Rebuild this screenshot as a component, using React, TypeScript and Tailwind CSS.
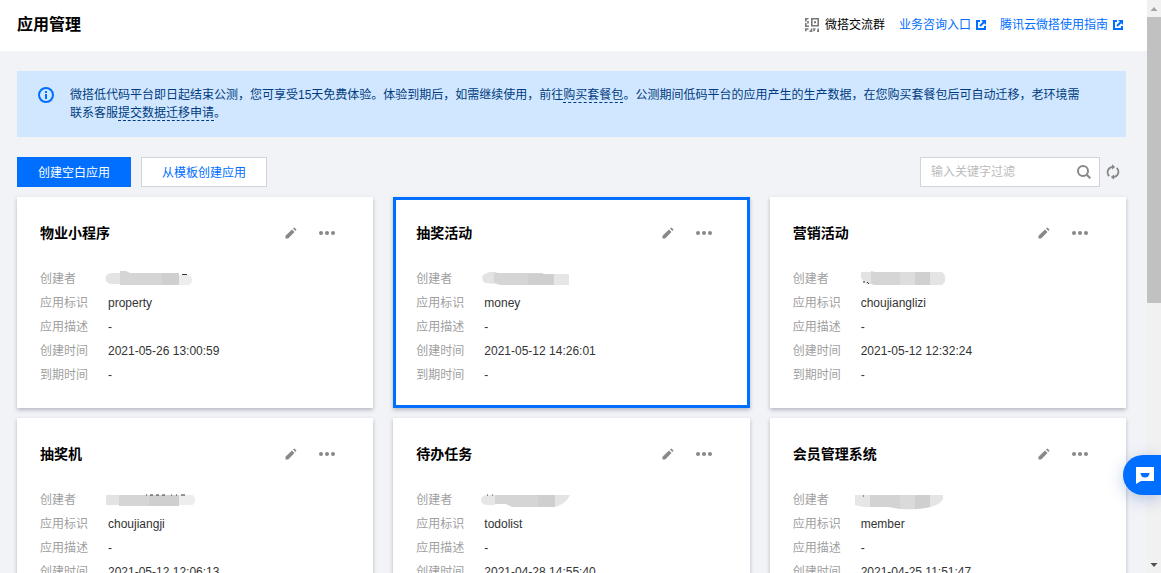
import { useState } from "react";

interface MaskPiece {
  d: string;
  fill: string;
}

interface AppInfo {
  name: string;
  ident: string;
  desc: string;
  created: string;
  expires: string;
  mask: MaskPiece[];
  marks?: string;
}

const APPS: AppInfo[] = [
  {
    name: "物业小程序",
    ident: "property",
    desc: "-",
    created: "2021-05-26 13:00:59",
    expires: "-",
    mask: [
      { d: "M16 3H8a6 5 0 0 0 0 11h8z", fill: "#e3e3e3" },
      { d: "M16 1h6l4 2h37v12H16z", fill: "#d5d5d5" },
      { d: "M58 3h17v12H58z", fill: "#cfcfcf" },
      { d: "M75 5h9a4 5 0 0 1 0 10h-9z", fill: "#ededed" },
    ],
    marks: "M78 4.500h5",
  },
  {
    name: "抽奖活动",
    ident: "money",
    desc: "-",
    created: "2021-05-12 14:26:01",
    expires: "-",
    mask: [
      { d: "M14 2H9L3 5a4 5 0 0 0 3 8l8 1z", fill: "#e3e3e3" },
      { d: "M14 2l4 1h45v12H20l-6-2z", fill: "#d5d5d5" },
      { d: "M48 4h26v11H48z", fill: "#cfcfcf" },
      { d: "M74 4h15v11H74z", fill: "#e6e6e6" },
    ],
  },
  {
    name: "营销活动",
    ident: "choujianglizi",
    desc: "-",
    created: "2021-05-12 12:32:24",
    expires: "-",
    mask: [
      { d: "M4 2h10v12H9L4 8z", fill: "#e3e3e3" },
      { d: "M14 1l4 1h25v13H18l-4-1z", fill: "#d5d5d5" },
      { d: "M43 2h15v13H43z", fill: "#dddddd" },
      { d: "M58 2h15v13H58z", fill: "#d0d0d0" },
      { d: "M73 2h11a4 6 0 0 1 0 13H73z", fill: "#e4e4e4" },
    ],
    marks: "M7 11v2M10 12l2 2",
  },
  {
    name: "抽奖机",
    ident: "choujiangji",
    desc: "-",
    created: "2021-05-12 12:06:13",
    expires: "-",
    mask: [
      { d: "M15 4H2v10h13z", fill: "#e3e3e3" },
      { d: "M15 4h45v11H15z", fill: "#d5d5d5" },
      { d: "M45 4h30v11H45z", fill: "#cfcfcf" },
      { d: "M75 4h13a3 5 0 0 1 0 10H75z", fill: "#ededed" },
    ],
    marks: "M42 4h1M46 4h3M52 4h3M58 4h3M67 4h1M72 4h1M77 4h4",
  },
  {
    name: "待办任务",
    ident: "todolist",
    desc: "-",
    created: "2021-04-28 14:55:40",
    expires: "-",
    mask: [
      { d: "M15 4H8a6 5 0 0 0-2 10h9z", fill: "#e6e6e6" },
      { d: "M15 4h60v12H32l-6-3H15z", fill: "#d5d5d5" },
      { d: "M58 4h17v12H58z", fill: "#cfcfcf" },
      { d: "M75 4h15q-3 8-15 12z", fill: "#e4e4e4" },
    ],
    marks: "M7 4h1M12 4h1",
  },
  {
    name: "会员管理系统",
    ident: "member",
    desc: "-",
    created: "2021-04-25 11:51:47",
    expires: "-",
    mask: [
      { d: "M-2 4h15v12H6l-8-2z", fill: "#e6e6e6" },
      { d: "M13 4h30v14l-12-2H13z", fill: "#d3d3d3" },
      { d: "M43 4h30v12q-10 3-30 2z", fill: "#dadada" },
      { d: "M58 4h15v12l-15 2z", fill: "#cfcfcf" },
      { d: "M73 4h13v4q-3 6-13 8z", fill: "#e4e4e4" },
    ],
    marks: "M6 5h1",
  },
];

function ShareIcon() {
  return (
    <svg width="10" height="10" viewBox="0 0 10 10" fill="none" aria-hidden="true">
      <path d="M4 1H1v8h8V6" stroke="currentColor" strokeWidth="2" />
      <path d="M5 0h5v5L8.200 3.200 4.700 6.700 3.300 5.300 6.800 1.800z" fill="currentColor" />
    </svg>
  );
}

function QrIcon() {
  return (
    <svg width="14" height="14" viewBox="0 0 14 14" fill="none" stroke="#777" strokeWidth="1.600" aria-hidden="true">
      <path d="M3.500 .8H.8V3.500M.8 5v3.200h3.200M3 3v2.500M6.800.8h6.400v7H6.800z" />
      <path d="M9 3.300h2v2H9z" fill="#777" stroke="none" />
      <path d="M.8 13.200V11H3.500M4.500 13.200h2V10.500M9 13.200V11h1.500M12 13.200h1.200V10.500" />
    </svg>
  );
}

function InfoIcon() {
  return (
    <svg width="16" height="16" viewBox="0 0 16 16" aria-hidden="true" className="mt-4 shrink-0">
      <circle cx="8" cy="8" r="7" fill="none" stroke="#006eff" strokeWidth="2" />
      <path d="M7 4h2v2H7zM7 7h2v5H7z" fill="#006eff" />
    </svg>
  );
}

function PencilIcon() {
  return (
    <svg width="12" height="12" viewBox="0 0 12 12" fill="#888" aria-hidden="true">
      <path d="M.5 11.500V8.800L7 2.500 9.500 5 3.200 11.500zM8 1.600L9.400.5 11.500 2.600 10.400 4z" />
    </svg>
  );
}

function DotsIcon() {
  return (
    <svg width="16" height="4" viewBox="0 0 16 4" fill="#888" aria-hidden="true">
      <circle cx="2" cy="2" r="2" />
      <circle cx="8" cy="2" r="2" />
      <circle cx="14" cy="2" r="2" />
    </svg>
  );
}

function AppCard({ app, selected }: { app: AppInfo; selected: boolean }) {
  return (
    <article
      className={`border-[3px] bg-white px-5 pt-[21px] pb-[18px] shadow-[0_2px_4px_rgba(54,58,80,0.32)] ${selected ? "border-[#006eff]" : "border-white"}`}
    >
      <div className="flex h-6 items-center">
        <h2 className="flex-1 text-sm font-bold text-black">{app.name}</h2>
        <div className="flex items-center gap-[22px] pr-[15px]">
          <button aria-label="编辑" className="cursor-pointer">
            <PencilIcon />
          </button>
          <button aria-label="更多" className="cursor-pointer">
            <DotsIcon />
          </button>
        </div>
      </div>
      <dl className="mt-[22px] grid grid-cols-[68px_1fr] text-xs leading-6">
        <dt className="text-[#a0a0a0]">创建者</dt>
        <dd className="-ml-1 flex items-center">
          <svg width="96" height="18" viewBox="0 0 96 18" className="overflow-visible" aria-hidden="true">
            {app.mask.map((m) => (
              <path key={m.d} d={m.d} fill={m.fill} />
            ))}
            {app.marks && <path d={app.marks} stroke="#333" fill="none" />}
          </svg>
        </dd>
        <dt className="text-[#a0a0a0]">应用标识</dt>
        <dd>{app.ident}</dd>
        <dt className="text-[#a0a0a0]">应用描述</dt>
        <dd>{app.desc}</dd>
        <dt className="text-[#a0a0a0]">创建时间</dt>
        <dd>{app.created}</dd>
        <dt className="text-[#a0a0a0]">到期时间</dt>
        <dd>{app.expires}</dd>
      </dl>
    </article>
  );
}

function Scrollbar() {
  return (
    <div className="flex w-3.5 shrink-0 flex-col items-center bg-[#f1f1f1]" aria-hidden="true">
      <svg width="14" height="17" viewBox="0 0 14 17">
        <path d="M3.500 11L7 7l3.500 4z" fill="#a3a3a3" />
      </svg>
      <div className="w-full flex-1">
        <div className="h-[53%] w-full bg-[#c1c1c1]" />
      </div>
      <svg width="14" height="17" viewBox="0 0 14 17">
        <path d="M3.500 7L7 11l3.500-4z" fill="#505050" />
      </svg>
    </div>
  );
}

export default function App() {
  const [keyword, setKeyword] = useState("");
  const apps = APPS.filter((a) => a.name.includes(keyword) || a.ident.includes(keyword));

  return (
    <div className="flex h-screen overflow-hidden bg-[#f2f3f7] font-['Liberation_Sans','Noto_Sans_CJK_SC',sans-serif] text-xs text-[#333]">
      <div className="min-w-0 flex-1">
        <header className="flex h-[51px] items-center justify-between bg-white pr-6 pb-0.5 pl-[17px]">
          <h1 className="text-base font-bold text-black">应用管理</h1>
          <nav className="flex items-center gap-3.5">
            <span className="flex items-center gap-1.5 text-black">
              <QrIcon />
              微搭交流群
            </span>
            <a href="#consult" className="flex items-center gap-[5px] text-[#006eff]">
              业务咨询入口
              <ShareIcon />
            </a>
            <a href="#guide" className="flex items-center gap-[5px] text-[#006eff]">
              腾讯云微搭使用指南
              <ShareIcon />
            </a>
          </nav>
        </header>

        <main className="pt-5 pr-[21px] pl-[17px]">
          <div className="flex gap-4 bg-[#d0e7ff] pr-10 pb-[15px] pl-[21px] text-[#003b80]">
            <InfoIcon />
            <p className="pt-[15px] leading-[18px]">
              微搭低代码平台即日起结束公测，您可享受15天免费体验。体验到期后，如需继续使用，前往
              <a href="#buy" className="border-b border-dashed border-[#003b80]">购买套餐包</a>
              。公测期间低码平台的应用产生的生产数据，在您购买套餐包后可自动迁移，老环境需联系客服
              <a href="#migrate" className="border-b border-dashed border-[#003b80]">提交数据迁移申请</a>。
            </p>
          </div>

          <div className="mt-5 flex h-[30px] items-center">
            <button className="h-full cursor-pointer bg-[#006eff] px-[21px] pt-0.5 text-white">创建空白应用</button>
            <button className="ml-2.5 h-full cursor-pointer border border-[#cfd5de] bg-white px-5 pt-0.5 text-[#006eff]">
              从模板创建应用
            </button>
            <div className="ml-auto flex h-full w-[180px] items-center border border-[#cfd5de] bg-white px-2">
              <input
                type="text"
                aria-label="输入关键字过滤"
                placeholder="输入关键字过滤"
                value={keyword}
                onChange={(e) => setKeyword(e.target.value)}
                className="min-w-0 flex-1 pl-0.5 outline-none placeholder:text-[#bbb]"
              />
              <button aria-label="搜索" className="cursor-pointer">
                <svg width="14" height="14" viewBox="0 0 14 14" fill="none" stroke="#888" strokeWidth="2">
                  <circle cx="6" cy="6" r="5" />
                  <path d="M9.500 9.500L13.300 13.300" />
                </svg>
              </button>
            </div>
            <button aria-label="刷新" className="mx-1.5 cursor-pointer">
              <svg width="14" height="16" viewBox="0 0 14 16" fill="none" stroke="#888" strokeWidth="1.800">
                <path d="M3.300 12.200A5.400 5.400 0 0 1 6.500 2.900M10.700 3.800A5.400 5.400 0 0 1 7.500 13.100" />
                <path d="M6 .3l3.200 2.600L6 5.500zM8 10.500l-3.200 2.600L8 15.700z" fill="#888" stroke="none" />
              </svg>
            </button>
          </div>

          <div className="mt-2.5 grid grid-cols-3 gap-x-5 gap-y-2.5">
            {apps.map((app) => (
              <AppCard key={app.ident} app={app} selected={app.ident === "money"} />
            ))}
          </div>
        </main>
      </div>

      <Scrollbar />

      <button
        aria-label="在线客服"
        className="fixed right-0 bottom-[78px] flex h-10 w-[38px] cursor-pointer items-center rounded-l-full bg-[#006eff] pl-[13px] shadow-[0_4px_16px_rgba(0,60,160,0.25)]"
      >
        <svg width="18" height="17" viewBox="0 0 18 17">
          <path d="M0 0h18v14H5l-5 3z" fill="#fff" />
          <path d="M4.500 6h9a4.500 4.500 0 0 1-9 0z" fill="#006eff" />
        </svg>
      </button>
    </div>
  );
}
